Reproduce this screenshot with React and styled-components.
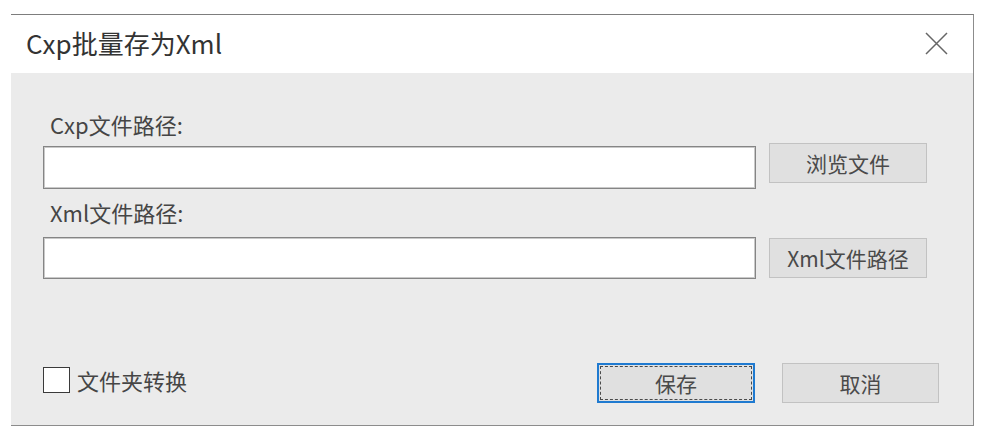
import React from 'react';
import styled, { createGlobalStyle } from 'styled-components';

const GlobalStyle = createGlobalStyle`
  html, body {
    margin: 0;
    background: #ffffff;
  }
  body {
    font-family: "Noto Sans CJK SC", "Noto Sans", sans-serif;
  }
`;

const Page = styled.div`
  padding: 14px 0 0 11px;
`;

const Dialog = styled.div`
  width: 962px;
  border-top: 1px solid #7d7d7d;
  border-right: 1px solid #8c8c8c;
  border-bottom: 1px solid #8c8c8c;
  display: flex;
  flex-direction: column;
`;

const TitleBar = styled.div`
  height: 58px;
  background: #ffffff;
  display: flex;
  align-items: center;
  justify-content: space-between;
  padding: 0 25px 0 15px;
`;

const Title = styled.div`
  font-size: 26px;
  line-height: 30px;
  color: #333333;
  margin-top: -2px;
`;

const CloseButton = styled.button`
  border: 0;
  padding: 0;
  background: transparent;
  width: 23px;
  height: 23px;
  display: flex;
  color: #666666;
  margin-top: -2px;
`;

const Body = styled.div`
  background: #ebebeb;
  padding: 39px 46px 22px 32px;
  display: flex;
  flex-direction: column;
`;

const Label = styled.div`
  font-size: 22px;
  line-height: 24px;
  color: #454545;
  padding-left: 7px;
  margin-top: ${p => p.$gap || 0}px;
`;

const Row = styled.div`
  display: flex;
  align-items: flex-start;
  gap: 13px;
  margin-top: ${p => p.$gap}px;
`;

const PathInput = styled.input`
  flex: 1;
  box-sizing: border-box;
  height: ${p => p.$h}px;
  margin: 0;
  border: 1px solid #858585;
  box-shadow: inset 0 0 0 1px #c9c9c9;
  background: #ffffff;
  outline: none;
`;

const Button = styled.button`
  box-sizing: border-box;
  width: ${p => p.$w || 158}px;
  height: 40px;
  margin: ${p => p.$offset || 0}px 0 0;
  padding: 0;
  background: #e0e0e0;
  border: 1px solid #c2c2c2;
  font-family: inherit;
  font-size: 21px;
  line-height: 24px;
  color: #4a4a4a;
  position: relative;
`;

const FocusButton = styled(Button)`
  border: 2px solid #1f7ad0;

  &::after {
    content: '';
    position: absolute;
    inset: 1px;
    border: 1px dashed #4a4a4a;
  }
`;

const Footer = styled.div`
  margin-top: 84px;
  margin-right: -12px;
  height: 40px;
  display: flex;
  align-items: center;
`;

const CheckLabel = styled.label`
  display: flex;
  align-items: center;
  gap: 7px;
  font-size: 22px;
  line-height: 24px;
  color: #454545;
  margin-top: -6px;
`;

const Box = styled.span`
  box-sizing: border-box;
  width: 27px;
  height: 26px;
  background: #ffffff;
  border: 1px solid #3a3a3a;
`;

const Actions = styled.div`
  margin-left: auto;
  display: flex;
  gap: 27px;
`;

export default function App() {
  return (
    <>
      <GlobalStyle />
      <Page>
        <Dialog>
          <TitleBar>
            <Title>Cxp批量存为Xml</Title>
            <CloseButton aria-label="close">
              <svg width="23" height="23" viewBox="0 0 23 23">
                <path d="M1 1 L22 22 M22 1 L1 22" stroke="currentColor" strokeWidth="1.5" fill="none" />
              </svg>
            </CloseButton>
          </TitleBar>
          <Body>
            <Label>Cxp文件路径:</Label>
            <Row $gap={10}>
              <PathInput $h={43} />
              <Button $offset={-3}>浏览文件</Button>
            </Row>
            <Label $gap={11}>Xml文件路径:</Label>
            <Row $gap={13}>
              <PathInput $h={42} />
              <Button $offset={1}>Xml文件路径</Button>
            </Row>
            <Footer>
              <CheckLabel>
                <Box />
                文件夹转换
              </CheckLabel>
              <Actions>
                <FocusButton>保存</FocusButton>
                <Button $w={157}>取消</Button>
              </Actions>
            </Footer>
          </Body>
        </Dialog>
      </Page>
    </>
  );
}
